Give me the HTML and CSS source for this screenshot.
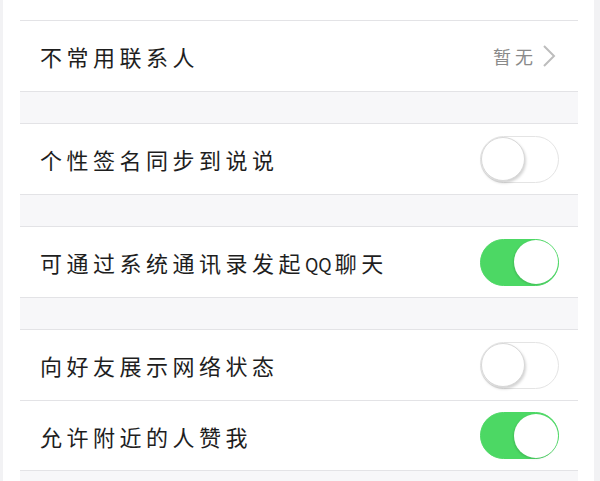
FILE: index.html
```html
<!DOCTYPE html>
<html lang="zh-CN">
<head>
<meta charset="UTF-8">
<meta name="viewport" content="width=device-width, initial-scale=1">
<title>隐私设置</title>
<link rel="stylesheet" href="styles.css">
</head>
<body>

<div class="screen">
  <div class="top"></div>

  <!-- 联系人 -->
  <div class="group">
    <div class="row">
      <span class="label">不常用联系人</span>
      <span class="detail">暂无
        <svg class="chev" width="14" height="22" viewBox="0 0 14 22"><polyline points="2,1 12,11 2,21" fill="none" stroke="#bdbdbd" stroke-width="2"/></svg>
      </span>
    </div>
  </div>

  <div class="gap"></div>

  <div class="group">
    <div class="row">
      <span class="label">个性签名同步到说说</span>
      <span class="switch"><span class="knob"></span></span>
    </div>
  </div>

  <div class="gap"></div>

  <div class="group">
    <div class="row">
      <span class="label">可通过系统通讯录发起<span class="latin">QQ</span>聊天</span>
      <span class="switch on"><span class="knob"></span></span>
    </div>
  </div>

  <div class="gap"></div>

  <div class="group">
    <div class="row">
      <span class="label">向好友展示网络状态</span>
      <span class="switch"><span class="knob"></span></span>
    </div>
    <div class="row">
      <span class="label">允许附近的人赞我</span>
      <span class="switch on"><span class="knob"></span></span>
    </div>
  </div>

  <div class="gap"></div>
</div>

</body>
</html>
```

FILE: styles.css
```css
:root{
  --band:#f7f7f9;--line:#e3e3e6;--text:#1e1e1e;--sub:#8a8a8a;--green:#4cd864;
}
html,body{margin:0;padding:0;background:#fff;}
body{font-family:"Noto Sans CJK SC","Noto Sans",sans-serif;color:var(--text);height:481px;overflow:hidden;}
.screen{border-left:3px solid #f2f2f4;border-right:6px solid #f2f2f4;padding:0 16px 0 17px;height:481px;box-sizing:border-box;background:#fff;}
.top{height:20px;}
.group{border-top:1px solid var(--line);border-bottom:1px solid var(--line);background:#fff;}
.row{height:70px;display:flex;align-items:center;justify-content:space-between;padding:0 19px 0 20px;}
.row+.row{border-top:1px solid var(--line);height:69px;}
.label{font-size:22px;letter-spacing:4.5px;}
.latin{font-size:18px;letter-spacing:0;margin-right:3px;}
.detail{display:flex;align-items:center;gap:5px;font-size:18px;letter-spacing:4px;color:var(--sub);margin-right:3px;}
.chev{display:block;}
.gap{height:31px;background:var(--band);}
.switch{width:79px;height:47px;box-sizing:border-box;border-radius:24px;border:1.5px solid #e4e4e4;background:#fff;display:flex;align-items:center;justify-content:flex-start;}
.knob{width:44px;height:44px;border-radius:50%;background:#fff;box-sizing:border-box;border:1px solid #d8d8d8;box-shadow:1px 2px 3px rgba(0,0,0,.18);}
.switch.on{background:var(--green);border-color:var(--green);justify-content:flex-end;}
.switch.on .knob{border:none;box-shadow:-1px 1px 2px rgba(0,0,0,.12);}
```
